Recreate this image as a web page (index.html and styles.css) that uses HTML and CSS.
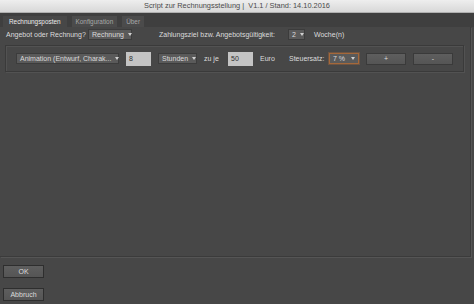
FILE: index.html
```html
<!DOCTYPE HTML>
<html>

<head>
  <title>Script zur Rechnungsstellung</title>
  <meta name="viewport" content="width=device-width, initial-scale=1">
  <link rel="stylesheet" href="styles.css">
</head>

<body>
  <div class="titlebar">Script zur Rechnungsstellung |&nbsp; V1.1 / Stand: 14.10.2016</div>
  <div class="window">
    <div class="tabs">
      <span class="tab active">Rechnungsposten</span>
      <span class="tab">Konfiguration</span>
      <span class="tab">Über</span>
    </div>
    <div class="page">
      <div class="row top">
        <span class="label lbl-type">Angebot oder Rechnung?</span>
        <span class="select sel-type">Rechnung <i class="arrow"></i></span>
        <span class="label lbl-pay">Zahlungsziel bzw. Angebotsgültigkeit:</span>
        <span class="select sel-weeks">2 <i class="arrow"></i></span>
        <span class="label">Woche(n)</span>
      </div>
      <div class="panel">
        <span class="select sel-item">Animation (Entwurf, Charak... <i class="arrow"></i></span>
        <span class="input in-hours">8</span>
        <span class="select sel-unit">Stunden <i class="arrow"></i></span>
        <span class="label lbl-each">zu je</span>
        <span class="input in-price">50</span>
        <span class="label lbl-euro">Euro</span>
        <span class="label lbl-tax">Steuersatz:</span>
        <span class="select sel-tax focus">7 % <i class="arrow"></i></span>
        <span class="button">+</span>
        <span class="button">-</span>
      </div>
    </div>
    <div class="footer">
      <span class="button dlg">OK</span>
      <span class="button dlg">Abbruch</span>
    </div>
  </div>
</body>

</html>
```

FILE: styles.css
```css
html {
  font-family: "Liberation Sans", Arial, sans-serif;
  font-size: 7px;
}

body {
  margin: 0;
  width: 474px;
  height: 304px;
  overflow: hidden;
  background-color: #474747;
}

.titlebar {
  height: 12px;
  line-height: 12px;
  text-align: center;
  color: #4a4a4a;
  font-size: 7.4px;
  background: linear-gradient(#eeeeee, #d8d8d8);
  border-bottom: 1px solid #b0b0b0;
}

.window {
  height: 291px;
  display: flex;
  flex-direction: column;
  background-color: #474747;
}

.tabs {
  display: flex;
  gap: 5px;
  padding: 3px 2px 0 3px;
  height: 11px;
  background-color: #3f3f3f;
}

.tab {
  padding: 0 4px;
  line-height: 11px;
  font-size: 6.4px;
  white-space: nowrap;
  color: #a8a8a8;
  background-color: #4b4b4b;
}

.tab.active {
  padding: 0 6px;
  color: #ececec;
  background-color: #474747;
}

.page {
  height: 229px;
  margin: 0 3px 0 0;
  border-right: 1px solid #3b3b3b;
  border-bottom: 1px solid #3b3b3b;
  box-shadow: 1px 1px 0 #555555;
}

.row {
  display: flex;
  align-items: center;
}

.top {
  padding: 2px 0 0 6px;
  height: 11px;
}

.label {
  flex-shrink: 0;
  white-space: nowrap;
  color: #dcdcdc;
  margin-right: 7px;
}

.lbl-type {
  width: 75px;
}

.lbl-pay {
  width: 122px;
  margin-left: 27px;
}

.lbl-each {
  width: 17px;
}

.lbl-euro {
  width: 22px;
}

.lbl-tax {
  width: 33px;
}

.select {
  display: inline-flex;
  flex-shrink: 0;
  align-items: center;
  justify-content: space-between;
  box-sizing: border-box;
  height: 11px;
  padding: 0 3px 0 3px;
  white-space: nowrap;
  color: #dadada;
  background-color: #5a5a5a;
  border: 1px solid #3c3c3c;
  margin-right: 7px;
}

.arrow {
  width: 0;
  height: 0;
  margin-left: 4px;
  border-left: 2px solid transparent;
  border-right: 2px solid transparent;
  border-top: 3px solid #d0d0d0;
}

.sel-type {
  width: 44px;
  margin-right: 0;
}

.sel-weeks {
  width: 17px;
  margin-right: 9px;
}

.panel {
  display: flex;
  align-items: center;
  margin: 5px 6px 0 5px;
  height: 27px;
  padding-left: 10px;
  box-sizing: border-box;
  border: 1px solid #3a3a3a;
  box-shadow: inset 1px 1px 0 #525252, 1px 1px 0 #525252;
}

.sel-item {
  width: 103px;
}

.sel-unit {
  width: 39px;
}

.sel-tax {
  width: 30px;
}

.focus {
  border-color: #a5683a;
  box-shadow: 0 0 0 1px #6d5442;
}

.input {
  flex-shrink: 0;
  box-sizing: border-box;
  width: 25px;
  height: 14px;
  line-height: 14px;
  padding-left: 3px;
  color: #303030;
  background-color: #c4c4c4;
  margin-right: 7px;
}

.button {
  display: inline-block;
  flex-shrink: 0;
  box-sizing: border-box;
  width: 40px;
  height: 12px;
  line-height: 10px;
  text-align: center;
  color: #dcdcdc;
  background: linear-gradient(#5e5e5e, #555555);
  border: 1px solid #3a3a3a;
  margin-right: 7px;
}

.footer {
  display: flex;
  flex-direction: column;
  gap: 10px;
  padding: 8px 0 0 3px;
}

.button.dlg {
  width: 41px;
  height: 13px;
  line-height: 11px;
  border-color: #2e2e2e;
}
```
